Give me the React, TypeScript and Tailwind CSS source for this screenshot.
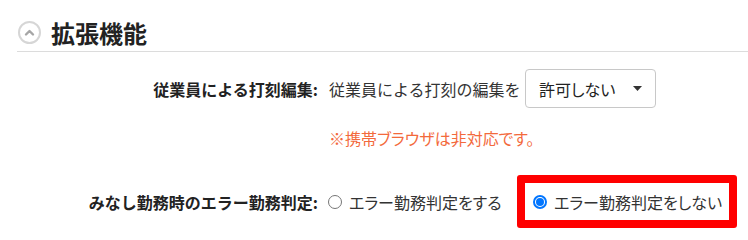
import React from "react";

const font = { fontFamily: '"Noto Sans CJK JP", "Noto Sans", sans-serif' };

export default function App() {
  return (
    <div className="w-[748px] h-[239px] bg-white text-[#333] overflow-hidden" style={font}>
      <div className="ml-[17px] h-[52px] border-b border-[#dcdcdc] flex items-center pt-[14px]">
        <div className="shrink-0 w-[23px] h-[23px] rounded-full border-[2px] border-[#d6d6d6] flex items-center justify-center ml-[1px]">
          <svg width="13" height="13" viewBox="0 0 13 13">
            <path d="M3 8.5 L6.5 5 L10 8.5" fill="none" stroke="#a6a6a6" strokeWidth="2.4" strokeLinecap="round" strokeLinejoin="round" />
          </svg>
        </div>
        <div className="ml-[10px] text-[24px] font-bold leading-[30px] text-[#222]">拡張機能</div>
      </div>

      <div className="flex items-center mt-[17px]">
        <div className="shrink-0 w-[318px] text-right text-[16px] font-bold text-[#222] leading-[24px]">従業員による打刻編集:</div>
        <div className="shrink-0 ml-[11px] w-[189px] whitespace-nowrap text-[16px] leading-[24px]">従業員による打刻の編集を</div>
        <div className="shrink-0 ml-[7px] w-[131px] h-[39px] border border-[#c8c8c8] rounded-[4px] flex items-center pl-[13px] pr-[13px] justify-between text-[16px] text-[#222] [font-feature-settings:'palt']">
          <span>許可しない</span>
          <svg width="9" height="5" viewBox="0 0 9 5">
            <path d="M0 0 L9 0 L4.5 5 Z" fill="#333" />
          </svg>
        </div>
      </div>

      <div className="ml-[329px] mt-[18px] text-[16px] leading-[24px] text-[#f36a3c] [font-feature-settings:'palt']">※携帯ブラウザは非対応です。</div>

      <div className="flex items-center mt-[25px]">
        <div className="shrink-0 w-[318px] text-right text-[16px] font-bold text-[#222] leading-[24px]">みなし勤務時のエラー勤務判定:</div>
        <label className="shrink-0 ml-[10px] w-[189px] flex items-center text-[16px] leading-[24px] [font-feature-settings:'palt']">
          <span className="w-[14px] h-[14px] rounded-full border border-[#767676] bg-white"></span>
          <span className="ml-[7px] whitespace-nowrap">エラー勤務判定をする</span>
        </label>
        <div className="shrink-0 h-[53px] border-[8px] border-[#ff0000] rounded-[3px] flex items-center pl-[8px] w-[220px]">
          <span className="shrink-0 w-[14px] h-[14px] rounded-full border-[2px] border-[#0075ff] flex items-center justify-center">
            <span className="w-[8px] h-[8px] rounded-full bg-[#0075ff]"></span>
          </span>
          <span className="ml-[7px] text-[16px] leading-[24px] whitespace-nowrap [font-feature-settings:'palt']">エラー勤務判定をしない</span>
        </div>
      </div>
    </div>
  );
}
